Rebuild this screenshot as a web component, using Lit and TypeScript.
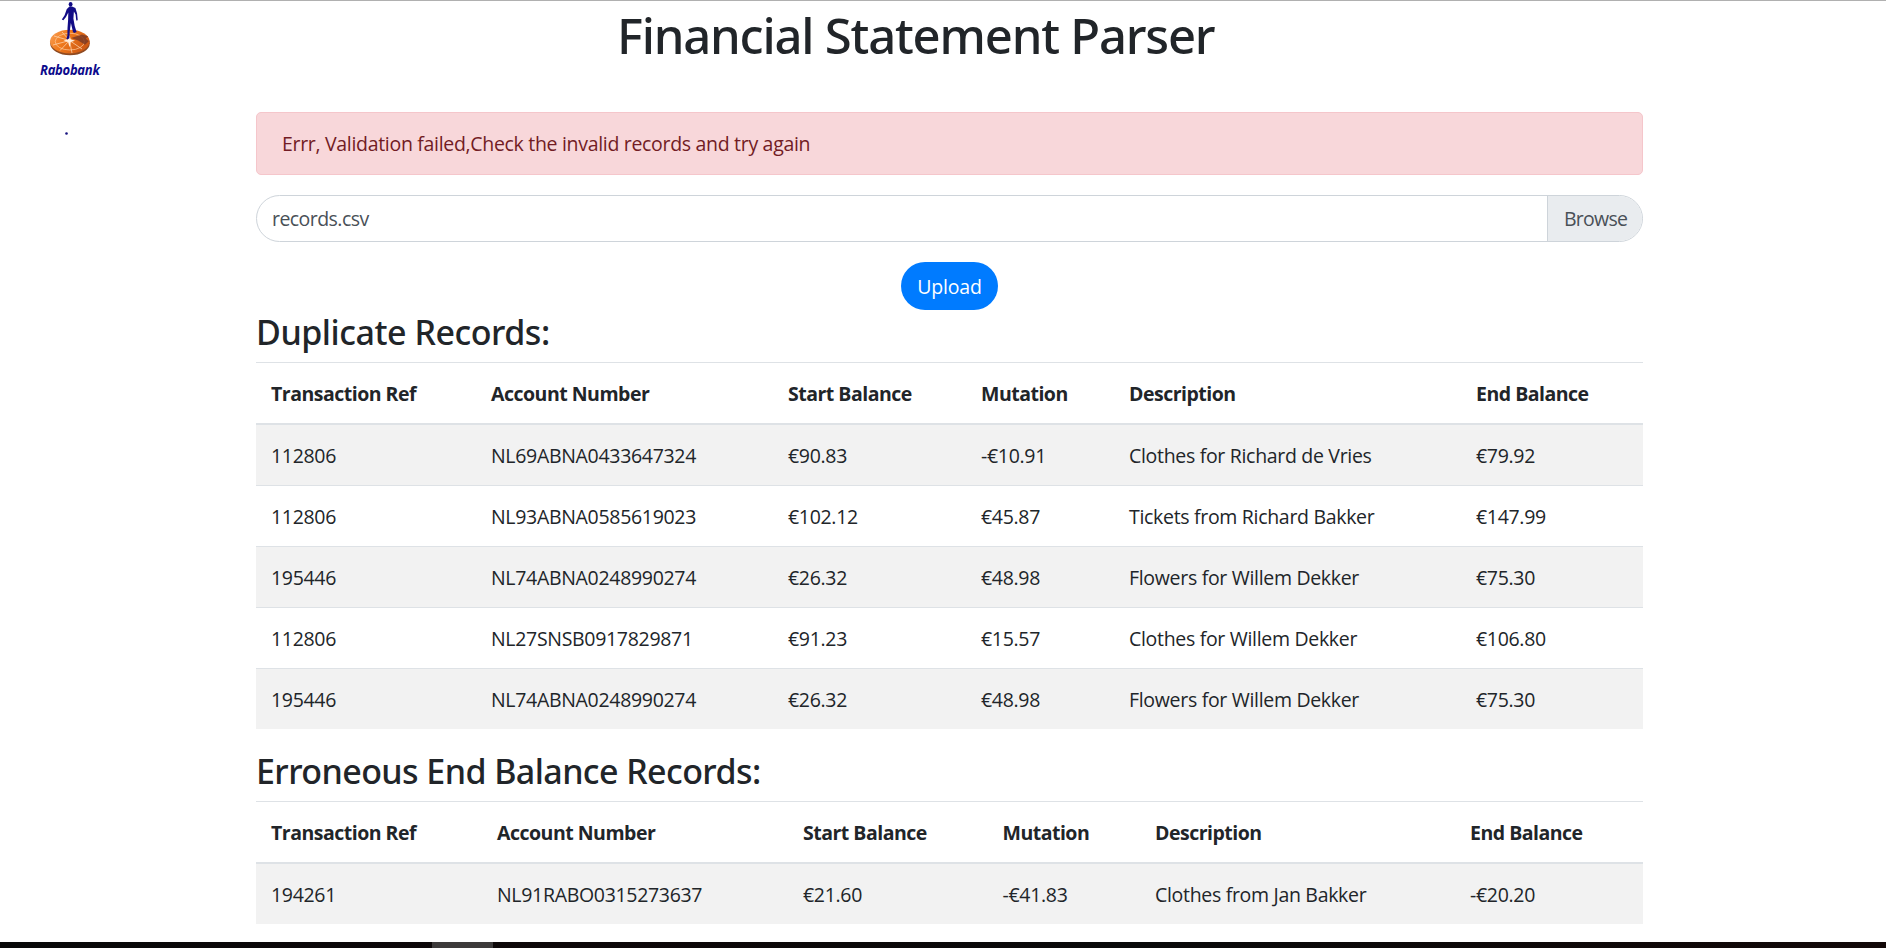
import { LitElement, html, css } from "lit";
import { customElement, property } from "lit/decorators.js";

type Row = string[];

const HEADINGS = ["Transaction Ref", "Account Number", "Start Balance", "Mutation", "Description", "End Balance"];

const DUPLICATES: Row[] = [
  ["112806", "NL69ABNA0433647324", "€90.83", "-€10.91", "Clothes for Richard de Vries", "€79.92"],
  ["112806", "NL93ABNA0585619023", "€102.12", "€45.87", "Tickets from Richard Bakker", "€147.99"],
  ["195446", "NL74ABNA0248990274", "€26.32", "€48.98", "Flowers for Willem Dekker", "€75.30"],
  ["112806", "NL27SNSB0917829871", "€91.23", "€15.57", "Clothes for Willem Dekker", "€106.80"],
  ["195446", "NL74ABNA0248990274", "€26.32", "€48.98", "Flowers for Willem Dekker", "€75.30"],
];

const ERRONEOUS: Row[] = [
  ["194261", "NL91RABO0315273637", "€21.60", "-€41.83", "Clothes from Jan Bakker", "-€20.20"],
];

@customElement("bank-logo")
export class BankLogo extends LitElement {
  static styles = css`
    :host { display: block; width: 140px; height: 150px; }
    svg { display: block; }
    .name { font: italic 700 14.3px "Open Sans", "Noto Sans", sans-serif; fill: #0d0a8c; }
  `;

  render() {
    return html`<svg width="140" height="150" viewBox="0 0 140 150">
      <defs>
        <linearGradient id="disc" x1="0" y1="0" x2="1" y2="0.4">
          <stop offset="0" stop-color="#f9a35c" />
          <stop offset="0.45" stop-color="#f07a1c" />
          <stop offset="1" stop-color="#cf5a14" />
        </linearGradient>
      </defs>
      <ellipse cx="70" cy="43.2" rx="19.8" ry="12" fill="#8d4a22" />
      <ellipse cx="69.8" cy="41.6" rx="19.8" ry="11.8" fill="url(#disc)" />
      <ellipse cx="69.8" cy="41.6" rx="14.6" ry="8.4" fill="none" stroke="#fbc08c" stroke-width="0.8" />
      <g stroke="#fcd0a8" stroke-width="0.8">
        <path d="M69.5 40.5 54 36M69.5 40.5 53 45M69.5 40.5 60 50.5M69.5 40.5 72 53M69.5 40.5 82 49M69.5 40.5 62 32" />
      </g>
      <path d="m69.5 35 1.2 4.2 4.3 1.6-4.3 1.3-1.2 5.2-1.4-5.2-4.6-1.4 4.6-1.5z" fill="#fff0df" />
      <path d="m71 38 11-3.4 6.2 1.7-2.4 2.2 3 2.8-3.8 3.4-6.8-4.2z" fill="#7c3b25" opacity="0.85" />
      <g fill="#120c86">
        <ellipse cx="70.6" cy="4.3" rx="1.9" ry="2.4" />
        <path d="M69.4 6.4h2.6l3.4 1.5 1.7 5.7.6 6.1-.8 1.4-.8-1.5-.5-5-1.7-3.2-.5 7.2 1.3 7.5 1.9 5.9-2.5 1-1.1-1.1-2.1-8.8-1.2 8.3-.3 6.9-2.2 1.1-.8-.8 1-2.8.1-7.5.6-8.2.2-7.6-2.3 4.5-2.6 3.2-1.6-.7 2.8-4.2 2.1-6z" />
      </g>
      <text class="name" x="40" y="74.5" textLength="59.5" lengthAdjust="spacingAndGlyphs">Rabobank</text>
      <circle cx="66.5" cy="133.5" r="1.3" fill="#16127f" />
    </svg>`;
  }
}

@customElement("records-table")
export class RecordsTable extends LitElement {
  @property({ attribute: false }) rows: Row[] = [];

  static styles = css`
    :host {
      display: grid;
      grid-template-columns: var(--columns);
      border-top: 1px solid #dee2e6;
    }
    .row { display: grid; grid-column: 1 / -1; grid-template-columns: subgrid; }
    .cell { padding: 16px 15px 14px; line-height: 30px; white-space: nowrap; }
    .head { border-bottom: 2px solid #dee2e6; font-weight: 700; letter-spacing: -0.5px; }
    .body + .body { border-top: 1px solid #dee2e6; }
    .odd { background: #f2f2f2; }
  `;

  render() {
    return html`
      <div class="row head">${HEADINGS.map((h) => html`<div class="cell">${h}</div>`)}</div>
      ${this.rows.map(
        (r, i) => html`<div class="row body ${i % 2 ? "" : "odd"}">
          ${r.map((c) => html`<div class="cell">${c}</div>`)}
        </div>`
      )}
    `;
  }
}

@customElement("app-root")
export class AppRoot extends LitElement {
  static styles = css`
    :host {
      display: flex;
      flex-direction: column;
      box-sizing: border-box;
      height: 948px;
      overflow: hidden;
      border-top: 1px solid #b0b0b0;
      background: #fff;
      color: #212529;
      font: 19.5px/30px "Open Sans", "Noto Sans", sans-serif;
      letter-spacing: -0.31px;
    }
    .page { flex: 1; display: grid; grid-template-columns: 256px 1387px 1fr; min-height: 0; }
    .logo { margin-top: -1px; }
    .title {
      margin: 4px 0 0;
      padding-left: 361px;
      height: 107px;
      font: 500 49px/60px "Noto Sans", sans-serif;
      letter-spacing: -1.2px;
    }
    .alert {
      box-sizing: border-box;
      height: 63px;
      padding: 16px 25px 14px;
      border: 1px solid #f5c6cb;
      border-radius: 5px;
      background: #f8d7da;
      color: #721c24;
    }
    .file {
      box-sizing: border-box;
      display: flex;
      justify-content: space-between;
      height: 47px;
      margin-top: 20px;
      border: 1px solid #ced4da;
      border-radius: 24px;
      overflow: hidden;
      color: #495057;
      line-height: 45px;
    }
    .name { padding-left: 15px; letter-spacing: -0.55px; }
    .browse {
      box-sizing: border-box;
      width: 95px;
      padding-left: 16px;
      border-left: 1px solid #ced4da;
      background: #e9ecef;
      letter-spacing: -0.75px;
    }
    .upload {
      display: block;
      width: 97px;
      height: 48px;
      margin: 20px auto 0;
      padding: 2px 0 0;
      border: 0;
      border-radius: 24px;
      background: #007bff;
      color: #fff;
      font: inherit;
      letter-spacing: -0.15px;
    }
    .heading { margin: 0; font: 500 34px/42px "Noto Sans", sans-serif; }
    .duplicate { margin-top: 1px; padding-bottom: 9px; letter-spacing: -0.47px; }
    .erroneous { margin-top: 21px; padding-bottom: 9px; letter-spacing: -0.58px; }
    .duplicates { --columns: 220px 297px 193px 148px 347px 1fr; }
    .errors { --columns: 226px 306px 199.5px 152.5px 315px 1fr; }
    .taskbar { height: 6px; flex: none; display: flex; background: linear-gradient(90deg, #080808, #0d0708 30%, #090909 60%, #120808); }
    .active { width: 61px; margin-left: 432px; background: #3c3a3a; }
  `;

  render() {
    return html`
      <div class="page">
        <bank-logo class="logo"></bank-logo>
        <main>
          <h1 class="title">Financial Statement Parser</h1>
          <div class="alert">Errr, Validation failed,Check the invalid records and try again</div>
          <div class="file"><span class="name">records.csv</span><span class="browse">Browse</span></div>
          <button class="upload">Upload</button>
          <h3 class="heading duplicate">Duplicate Records:</h3>
          <records-table class="duplicates" .rows=${DUPLICATES}></records-table>
          <h3 class="heading erroneous">Erroneous End Balance Records:</h3>
          <records-table class="errors" .rows=${ERRONEOUS}></records-table>
        </main>
      </div>
      <div class="taskbar"><div class="active"></div></div>
    `;
  }
}
